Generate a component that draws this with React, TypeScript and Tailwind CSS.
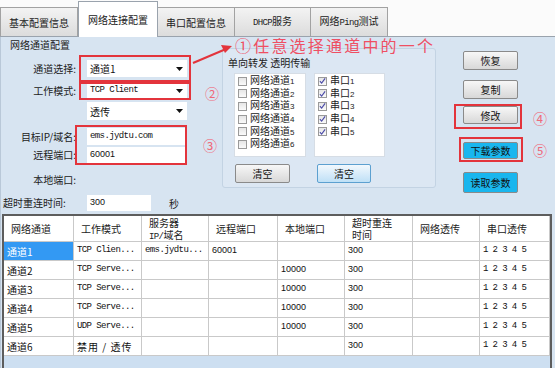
import React from "react";

const cjk = { fontFamily: "'Noto Sans CJK SC', 'Noto Sans', sans-serif" };
const mono = { fontFamily: "'Liberation Mono', 'Noto Sans CJK SC', monospace" };
const num = { fontFamily: "'Liberation Sans', 'Noto Sans CJK SC', sans-serif" };

function Caret() {
  return (
    <svg width="7" height="4" viewBox="0 0 7 4" className="shrink-0">
      <path d="M0 0 L7 0 L3.5 4 Z" fill="#111" />
    </svg>
  );
}

function Select({ children, monoText }: { children: React.ReactNode; monoText?: boolean }) {
  return (
    <div className="ml-[11px] flex h-full w-[100px] items-center justify-between bg-white pl-[3px] pr-[4px]">
      <span
        className={monoText ? "text-[9px] tracking-[-0.6px] text-[#111]" : "text-[10px] text-[#111]"}
        style={monoText ? mono : cjk}
      >
        {children}
      </span>
      <Caret />
    </div>
  );
}

function Label({ children }: { children: React.ReactNode }) {
  return (
    <div className="w-[75px] shrink-0 text-right text-[10px] leading-none text-[#222]" style={cjk}>
      {children}
    </div>
  );
}

function Check({ checked }: { checked?: boolean }) {
  return (
    <div className="flex h-[9px] w-[9px] shrink-0 items-center justify-center border border-[#9a9a9a] bg-gradient-to-b from-[#e6e6e6] to-[#fafafa]">
      {checked && (
        <svg width="8" height="8" viewBox="0 0 8 8">
          <path d="M1 4.2 L3 6.5 L7 1" stroke="#4b4ba8" strokeWidth="1.3" fill="none" />
        </svg>
      )}
    </div>
  );
}

function Btn({ children, blue, hover, className }: { children: React.ReactNode; blue?: boolean; hover?: boolean; className?: string }) {
  const base = blue
    ? "bg-[#19b6ee] border-[#8a8a8a]"
    : hover
    ? "bg-gradient-to-b from-[#f2f8fd] to-[#bfe0f6] border-[#5ca0d0]"
    : "bg-gradient-to-b from-[#f7f7f7] to-[#d8d8d8] border-[#8a8a8a]";
  return (
    <div
      className={`flex items-center justify-center rounded-[2px] border text-[10px] text-[#111] ${base} ${className ?? ""}`}
      style={cjk}
    >
      {children}
    </div>
  );
}

const tabs = ["基本配置信息", "网络连接配置", "串口配置信息", "DHCP服务", "网络Ping测试"];
const tabW = [78, 80, 78, 77, 78];

const cols = [70, 68, 67, 69, 67, 68, 67, 70];
const headers: React.ReactNode[] = [
  "网络通道",
  "工作模式",
  <div className="flex flex-col">
    <div className="h-[12px] leading-[12px]">服务器</div>
    <div className="h-[12px] leading-[12px]">
      <span style={mono} className="text-[9px] tracking-[-0.6px]">IP/</span>域名
    </div>
  </div>,
  "远程端口",
  "本地端口",
  <div className="flex flex-col">
    <div className="h-[12px] leading-[12px]">超时重连</div>
    <div className="h-[12px] leading-[12px]">时间</div>
  </div>,
  "网络透传",
  "串口透传",
];

const rows = [
  ["通道1", "TCP Clien...", "ems.jydtu...", "60001", "", "300", "", "1 2 3 4 5"],
  ["通道2", "TCP Serve...", "", "", "10000", "300", "", "1 2 3 4 5"],
  ["通道3", "TCP Serve...", "", "", "10000", "300", "", "1 2 3 4 5"],
  ["通道4", "TCP Serve...", "", "", "10000", "300", "", "1 2 3 4 5"],
  ["通道5", "UDP Serve...", "", "", "10000", "300", "", "1 2 3 4 5"],
  ["通道6", "禁用 / 透传", "", "", "", "300", "", "1 2 3 4 5"],
];

function Cell({ v, ci, ri }: { v: string; ci: number; ri: number }) {
  const sel = ci === 0 && ri === 0;
  let style = cjk;
  let cls = "text-[10px]";
  if (ci === 1 && ri < 5) {
    style = mono;
    cls = "text-[9px] tracking-[-0.6px]";
  } else if (ci === 2 || ci === 7) {
    style = mono;
    cls = "text-[9px] tracking-[-0.6px]";
  } else if (ci >= 3 && ci <= 5) {
    style = num;
    cls = "text-[9px]";
  } else if (ci === 1) {
    cls = "text-[10px] tracking-[1px]";
  }
  return (
    <div
      className={`flex h-[19px] items-center overflow-hidden whitespace-nowrap border-b border-r border-[#c9c9c9] pl-[3px] ${
        sel ? "bg-[#3399f3] text-white" : "bg-white text-[#111]"
      } ${cls}`}
      style={{ ...style, width: cols[ci] }}
    >
      {v}
    </div>
  );
}

export default function App() {
  return (
    <div className="relative h-[368px] w-[555px] overflow-hidden bg-[#fbfbfb]" style={cjk}>
      {/* Tabs */}
      <div className="flex h-[37px] items-end border-b border-[#9aa3ad]">
        {tabs.map((t, i) => {
          const active = i === 1;
          return (
            <div
              key={t}
              className={`flex items-center justify-center border border-b-0 text-[10px] text-[#222] ${
                active
                  ? "relative z-10 -mb-[1px] h-[36px] border-[#9aa3ad] bg-white"
                  : "h-[29px] border-[#a2a2a2] bg-gradient-to-b from-[#f3f3f3] to-[#dcdcdc]"
              } ${i > 0 && !active ? "-ml-[1px]" : ""}`}
              style={{ width: tabW[i] }}
            >
              {i === 3 ? (
                <span>
                  <span style={mono} className="text-[9px] tracking-[-0.6px]">DHCP</span>服务
                </span>
              ) : i === 4 ? (
                <span>
                  网络<span style={mono} className="text-[9px] tracking-[-0.6px]">Ping</span>测试
                </span>
              ) : (
                t
              )}
            </div>
          );
        })}
      </div>

      {/* Panel */}
      <div className="h-[331px] border-l border-[#b9c8d8] bg-[#d7e4f1]">
        <div className="flex h-[177px]">
          {/* left form */}
          <div className="flex w-[200px] shrink-0 flex-col">
            <div className="h-[13px] pl-[9px] pt-[2px] text-[10px] leading-[11px] text-[#222]">网络通道配置</div>
            <div className="mt-[10px] flex h-[17px] items-center">
              <Label>通道选择:</Label>
              <Select>通道1</Select>
            </div>
            <div className="mt-[6px] flex h-[16px] items-center">
              <Label>工作模式:</Label>
              <Select monoText>TCP Client</Select>
            </div>
            <div className="mt-[3px] flex h-[18px] items-center">
              <Label>{""}</Label>
              <Select>透传</Select>
            </div>
            <div className="mt-[8px] flex h-[17px] items-center">
              <Label>目标IP/域名:</Label>
              <div className="ml-[11px] flex h-full w-[98px] items-center bg-white pl-[3px]">
                <span style={mono} className="text-[9px] tracking-[-0.6px] text-[#111]">ems.jydtu.com</span>
              </div>
            </div>
            <div className="mt-[2px] flex h-[16px] items-center">
              <Label>远程端口:</Label>
              <div className="ml-[11px] flex h-full w-[98px] items-center bg-white pl-[3px]">
                <span style={num} className="text-[9px] text-[#111]">60001</span>
              </div>
            </div>
            <div className="mt-[9px] flex h-[16px] items-center">
              <Label>本地端口:</Label>
            </div>
            <div className="mt-[7px] flex h-[16px] items-center">
              <div className="w-[77px] shrink-0 pl-[2px] text-[10px] leading-none text-[#222]">超时重连时间:</div>
              <div className="ml-[9px] flex h-full w-[64px] items-center bg-white pl-[3px]">
                <span style={num} className="text-[9px] text-[#111]">300</span>
              </div>
              <span className="ml-[18px] text-[10px] text-[#222]">秒</span>
            </div>
          </div>

          {/* middle group */}
          <div className="ml-[21px] mt-[11px] flex h-[140px] w-[214px] shrink-0 flex-col rounded-[3px] border border-[#c3d3e3] bg-[#dce7f3]">
            <div className="ml-[5px] mt-[9px] h-[10px] text-[10px] leading-[10px] text-[#222]">单向转发 透明传输</div>
            <div className="mt-[5px] flex h-[84px]">
              <div className="ml-[11px] flex w-[72px] flex-col border border-[#d6dde5] bg-white pl-[3px] pt-[1px]">
                {[1, 2, 3, 4, 5, 6].map((n) => (
                  <div key={n} className="flex h-[12.6px] items-center gap-[3px] text-[10px] leading-[12px] text-[#222]">
                    <Check />
                    <span>
                      网络通道<span style={num} className="text-[8px]">{n}</span>
                    </span>
                  </div>
                ))}
              </div>
              <div className="ml-[8px] flex w-[71px] flex-col border border-[#d6dde5] bg-white pl-[3px] pt-[1px]">
                {[1, 2, 3, 4, 5].map((n) => (
                  <div key={n} className="flex h-[12.6px] items-center gap-[3px] text-[10px] leading-[12px] text-[#222]">
                    <Check checked />
                    <span>
                      串口<span style={num} className="text-[8px]">{n}</span>
                    </span>
                  </div>
                ))}
              </div>
            </div>
            <div className="mt-[7px] flex">
              <Btn className="ml-[12px] h-[19px] w-[55px]">清空</Btn>
              <Btn hover className="ml-[27px] h-[19px] w-[54px]">清空</Btn>
            </div>
          </div>

          {/* right buttons */}
          <div className="ml-[27px] flex w-[55px] shrink-0 flex-col">
            <Btn className="mt-[14px] h-[19px]">恢复</Btn>
            <Btn className="mt-[10px] h-[19px]">复制</Btn>
            <Btn className="mt-[7px] h-[18px]">修改</Btn>
            <Btn blue className="mt-[18px] h-[17px]">下载参数</Btn>
            <Btn blue className="mt-[13px] h-[21px] border-[1.5px]">读取参数</Btn>
          </div>
        </div>

        {/* table */}
        <div className="ml-[1px] h-[154px] w-[550px] border-x-[2px] border-t-[2px] border-[#5d5d5d] bg-[#cddff1]">
          <div className="flex">
            {headers.map((h, i) => (
              <div
                key={i}
                className="flex h-[26px] items-center border-b border-r border-[#c9c9c9] bg-white pl-[7px] text-[10px] text-[#222]"
                style={{ width: cols[i] }}
              >
                {h}
              </div>
            ))}
          </div>
          {rows.map((r, ri) => (
            <div key={ri} className="flex">
              {r.map((v, ci) => (
                <Cell key={ci} v={v} ci={ci} ri={ri} />
              ))}
            </div>
          ))}
        </div>
      </div>

      {/* annotations */}
      <div className="pointer-events-none absolute left-[79px] top-[55px] h-[27px] w-[112px] border-2 border-[#e3343c]" />
      <div className="pointer-events-none absolute left-[79px] top-[82px] h-[18px] w-[112px] border-2 border-[#e3343c]" />
      <div className="pointer-events-none absolute left-[75px] top-[125px] h-[40px] w-[112px] border-2 border-[#e3343c]" />
      <div className="pointer-events-none absolute left-[454px] top-[104px] h-[25px] w-[68px] border-2 border-[#e3343c]" />
      <div className="pointer-events-none absolute left-[459px] top-[137px] h-[25px] w-[64px] border-2 border-[#e3343c]" />
      <svg className="pointer-events-none absolute left-0 top-0" width="555" height="368">
        <line x1="193" y1="63" x2="226" y2="49" stroke="#e3343c" strokeWidth="2" />
        <path d="M232 46 L221 45 L225 53 Z" fill="#e3343c" />
      </svg>
      <div className="pointer-events-none absolute left-[235px] top-[35px] whitespace-nowrap text-[16px] leading-[20px] tracking-[2.2px] text-[#ef4f63]">
        ①任意选择通道中的一个
      </div>
      <div className="pointer-events-none absolute left-[205px] top-[84px] text-[14px] leading-[18px] text-[#ef6a7a]">②</div>
      <div className="pointer-events-none absolute left-[203px] top-[136px] text-[14px] leading-[18px] text-[#ef6a7a]">③</div>
      <div className="pointer-events-none absolute left-[533px] top-[109px] text-[14px] leading-[18px] text-[#ef6a7a]">④</div>
      <div className="pointer-events-none absolute left-[533px] top-[141px] text-[14px] leading-[18px] text-[#ef6a7a]">⑤</div>
    </div>
  );
}
